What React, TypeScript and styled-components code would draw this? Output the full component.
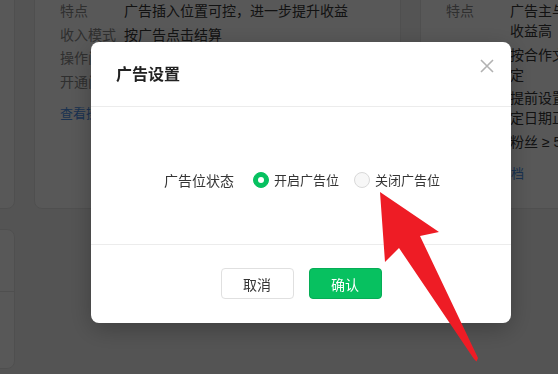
import styled, { createGlobalStyle } from "styled-components";

const GlobalStyle = createGlobalStyle`
  * {
    box-sizing: border-box;
  }
  body {
    margin: 0;
    background: #f2f2f2;
    font-family: "Liberation Sans", "Noto Sans CJK SC", sans-serif;
    overflow: hidden;
  }
`;

const Page = styled.div`
  display: grid;
  grid-template-columns: repeat(3, 367px);
  column-gap: 19px;
  row-gap: 20px;
  margin: -20px 0 0 -352px;
  width: 1200px;
`;

const Card = styled.div`
  background: #fff;
  border: 1px solid #e6e6e6;
  border-radius: 8px;
  padding: 20px 24px 24px 25px;
`;

const InfoList = styled.div`
  display: flex;
  flex-direction: column;
  gap: 3.5px;
`;

const InfoRow = styled.div`
  display: grid;
  grid-template-columns: 64px 168px;
  font-size: 14px;
  line-height: 20px;
`;

const InfoLabel = styled.span`
  color: #888;
`;

const InfoValue = styled.span<{ $nowrap?: boolean }>`
  color: #353535;
  white-space: ${(p) => (p.$nowrap ? "nowrap" : "normal")};
`;

const MoreLink = styled.a`
  display: block;
  margin-top: 12px;
  font-size: 13px;
  line-height: 20px;
  color: #4b8fe8;
  text-decoration: none;
`;

const StatCard = styled(Card)`
  grid-column: 1;
  height: 140px;
  padding: 0;
`;

const StatHead = styled.div`
  height: 62px;
  border-bottom: 1px solid #e6e6e6;
  padding: 20px 24px;
  font-size: 14px;
  color: #353535;
`;

const Mask = styled.div`
  position: fixed;
  inset: 0;
  background: rgba(0, 0, 0, 0.655);
  display: flex;
  justify-content: center;
  align-items: flex-start;
  padding: 42px 0 0 44px;
`;

const Dialog = styled.div`
  width: 420px;
  background: #fff;
  border-radius: 8px;
  box-shadow: 0 6px 24px rgba(0, 0, 0, 0.25);
  display: flex;
  flex-direction: column;
`;

const DialogHead = styled.div`
  height: 65px;
  display: flex;
  align-items: center;
  justify-content: space-between;
  padding: 0 17px 0 25px;
  border-bottom: 1px solid #ececec;
`;

const DialogTitle = styled.h3`
  margin: 0;
  font-size: 16px;
  font-weight: 600;
  color: #222;
  line-height: 22px;
  padding-top: 2px;
`;

const CloseButton = styled.button`
  border: 0;
  background: none;
  padding: 0;
  width: 14px;
  height: 14px;
  margin-top: -16px;
  display: flex;
  cursor: pointer;
`;

const DialogBody = styled.div`
  height: 138px;
  display: flex;
  align-items: center;
  justify-content: center;
  padding: 8px 0 0 2px;
  border-bottom: 1px solid #ececec;
`;

const FieldLabel = styled.span`
  font-size: 14px;
  color: #353535;
  margin-right: 19px;
`;

const RadioOption = styled.label`
  display: flex;
  align-items: center;
  gap: 5px;
  font-size: 13px;
  color: #353535;
  & + & {
    margin-left: 15px;
  }
`;

const RadioDot = styled.span<{ $checked?: boolean }>`
  width: 16px;
  height: 16px;
  border-radius: 50%;
  display: flex;
  align-items: center;
  justify-content: center;
  background: ${(p) => (p.$checked ? "#07c160" : "#f7f7f7")};
  border: 1px solid ${(p) => (p.$checked ? "#07c160" : "#d9d9d9")};
  &::after {
    content: "";
    width: 6px;
    height: 6px;
    border-radius: 50%;
    background: #fff;
    display: ${(p) => (p.$checked ? "block" : "none")};
  }
`;

const DialogFoot = styled.div`
  display: flex;
  justify-content: center;
  gap: 15px;
  padding: 23px 0 24px;
`;

const Button = styled.button<{ $primary?: boolean }>`
  height: 31px;
  min-width: 73px;
  padding: 0 20px;
  border-radius: 4px;
  font-family: inherit;
  font-size: 14px;
  cursor: pointer;
  background: ${(p) => (p.$primary ? "#07c160" : "#fff")};
  color: ${(p) => (p.$primary ? "#fff" : "#353535")};
  border: 1px solid ${(p) => (p.$primary ? "#06ad56" : "#e0e0e0")};
`;

const Arrow = styled.svg`
  position: fixed;
  left: 0;
  top: 0;
  pointer-events: none;
`;

function App() {
  return (
    <>
      <GlobalStyle />
      <Page>
        <Card>
          <InfoList>
            <InfoRow>
              <InfoLabel>特点</InfoLabel>
              <InfoValue>广告插入位置可控</InfoValue>
            </InfoRow>
          </InfoList>
          <MoreLink>查看操作指引</MoreLink>
        </Card>
        <Card>
          <InfoList>
            <InfoRow>
              <InfoLabel>特点</InfoLabel>
              <InfoValue $nowrap>广告插入位置可控，进一步提升收益</InfoValue>
            </InfoRow>
            <InfoRow>
              <InfoLabel>收入模式</InfoLabel>
              <InfoValue>按广告点击结算</InfoValue>
            </InfoRow>
            <InfoRow>
              <InfoLabel>操作门槛</InfoLabel>
              <InfoValue>在文章中插入广告位</InfoValue>
            </InfoRow>
            <InfoRow>
              <InfoLabel>开通门槛</InfoLabel>
              <InfoValue>粉丝 ≥ 500</InfoValue>
            </InfoRow>
          </InfoList>
          <MoreLink>查看操作指引</MoreLink>
        </Card>
        <Card>
          <InfoList>
            <InfoRow>
              <InfoLabel>特点</InfoLabel>
              <InfoValue>广告主与流量主双向互选，收益高</InfoValue>
            </InfoRow>
            <InfoRow>
              <InfoLabel>收入模式</InfoLabel>
              <InfoValue>按合作文章报价结算，按约定</InfoValue>
            </InfoRow>
            <InfoRow>
              <InfoLabel>操作门槛</InfoLabel>
              <InfoValue>提前设置合作内容，并在约定日期正常发文</InfoValue>
            </InfoRow>
            <InfoRow>
              <InfoLabel>开通门槛</InfoLabel>
              <InfoValue>粉丝 ≥ 5000</InfoValue>
            </InfoRow>
          </InfoList>
          <MoreLink>查看接入文档</MoreLink>
        </Card>
        <StatCard>
          <StatHead>数据概况</StatHead>
        </StatCard>
      </Page>

      <Mask>
        <Dialog>
          <DialogHead>
            <DialogTitle>广告设置</DialogTitle>
            <CloseButton aria-label="关闭">
              <svg width="14" height="14" viewBox="0 0 14 14">
                <path d="M1 1L13 13M13 1L1 13" stroke="#b2b2b2" strokeWidth="1.6" />
              </svg>
            </CloseButton>
          </DialogHead>
          <DialogBody>
            <FieldLabel>广告位状态</FieldLabel>
            <RadioOption>
              <RadioDot $checked />
              开启广告位
            </RadioOption>
            <RadioOption>
              <RadioDot />
              关闭广告位
            </RadioOption>
          </DialogBody>
          <DialogFoot>
            <Button>取消</Button>
            <Button $primary>确认</Button>
          </DialogFoot>
        </Dialog>
      </Mask>

      <Arrow width="558" height="374" viewBox="0 0 558 374">
        <polygon
          points="380,192 439,232 420,236 478,358 476.5,361.5 474,359 399,248 385,262"
          fill="#ee1c25"
        />
      </Arrow>
    </>
  );
}

export default App;
